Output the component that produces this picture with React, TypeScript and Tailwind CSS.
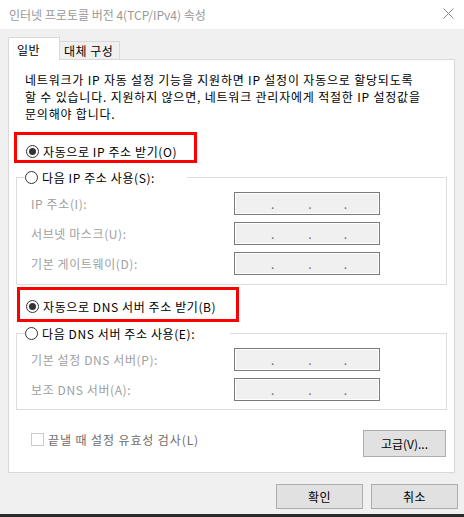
import React from "react";

const FONT = '"Noto Sans CJK KR", "Noto Sans", sans-serif';

function Radio({ checked }: { checked?: boolean }) {
  return (
    <span className="flex h-[13px] w-[13px] shrink-0 items-center justify-center rounded-full border border-[#333333] bg-white">
      {checked && <span className="h-[7px] w-[7px] rounded-full bg-[#333333]" />}
    </span>
  );
}

function IpBox() {
  return (
    <div className="h-[23px] w-[146px] border border-[#7a7a7a] bg-[#f0f0f0] tracking-normal shadow-[inset_0_0_0_1px_#ffffff]">
      <div className="flex h-full items-end pb-[4px] text-[12px] leading-[12px] text-[#6d6d6d]">
        <span className="ml-[36px]">.</span>
        <span className="ml-[34px]">.</span>
        <span className="ml-[32px]">.</span>
      </div>
    </div>
  );
}

function FieldRow({ label }: { label: string }) {
  return (
    <div className="flex h-[23px] items-center">
      <span className="w-[217px] shrink-0 pl-[14px] text-[12px] leading-[17px] text-[#a0a0a0]">{label}</span>
      <IpBox />
    </div>
  );
}

export default function App() {
  return (
    <div
      className="flex h-[517px] w-[464px] flex-col overflow-hidden bg-[#f0f0f0] text-black"
      style={{ fontFamily: FONT }}
    >
      {/* title bar */}
      <div className="flex h-[29px] shrink-0 items-center justify-between bg-white pl-[9px] pr-[10px]">
        <span className="text-[12px] leading-[17px] text-[#999999]">인터넷 프로토콜 버전 4(TCP/IPv4) 속성</span>
        <svg width="11" height="11" viewBox="0 0 11 11" className="mb-[2px]">
          <path d="M0.5 0.5 L10.5 10.5 M10.5 0.5 L0.5 10.5" stroke="#8c8c8c" strokeWidth="1" fill="none" />
        </svg>
      </div>

      {/* tabs */}
      <div className="ml-[8px] mt-[8px] flex items-end">
        <div className="relative z-10 -mb-px flex h-[23px] w-[52px] items-center border border-b-0 border-[#d9d9d9] bg-white pl-[8px] text-[12px] leading-[17px] tracking-[0.5px]">
          일반
        </div>
        <div className="flex h-[18px] w-[60px] items-center border-r border-t border-[#d9d9d9] pl-[4px] text-[12px] leading-[17px] tracking-[0.5px]">
          대체 구성
        </div>
      </div>

      {/* panel */}
      <div className="mx-[8px] flex h-[414px] w-[447px] flex-col border border-[#d9d9d9] bg-white text-[12px] tracking-[0.6px]">
        <p className="pl-[16px] pt-[11px] leading-[17px] tracking-[0.8px]">
          네트워크가 IP 자동 설정 기능을 지원하면 IP 설정이 자동으로 할당되도록
          <br />
          할 수 있습니다. 지원하지 않으면, 네트워크 관리자에게 적절한 IP 설정값을
          <br />
          문의해야 합니다.
        </p>

        {/* red box 1 */}
        <div className="ml-[5px] mt-[10px] h-[31px] w-[183px] border-[3px] border-[#ff0000] pl-[9px] pt-[8px]">
          <div className="flex h-[17px] items-center gap-[4px] leading-[17px]">
            <Radio checked />
            <span>자동으로 IP 주소 받기(O)</span>
          </div>
        </div>

        {/* group 1 */}
        <fieldset className="ml-[7px] mt-[5px] w-[431px] border border-[#dcdcdc] pb-[9px]">
          <legend className="ml-[8px] flex h-[18px] w-[162px] items-center gap-[4px] leading-[17px]">
            <Radio />
            <span>다음 IP 주소 사용(S):</span>
          </legend>
          <div className="mt-[6px] flex flex-col gap-[7px]">
            <FieldRow label="IP 주소(I):" />
            <FieldRow label="서브넷 마스크(U):" />
            <FieldRow label="기본 게이트웨이(D):" />
          </div>
        </fieldset>

        {/* red box 2 */}
        <div className="ml-[8px] mt-[2px] h-[35px] w-[222px] border-[3px] border-[#ff0000] pl-[6px] pt-[8px]">
          <div className="flex h-[17px] items-center gap-[4px] leading-[17px]">
            <Radio checked />
            <span>자동으로 DNS 서버 주소 받기(B)</span>
          </div>
        </div>

        {/* group 2 */}
        <fieldset className="ml-[7px] mt-[2px] w-[431px] border border-[#dcdcdc] pb-[8px]">
          <legend className="ml-[8px] flex h-[18px] w-[205px] items-center gap-[4px] leading-[17px]">
            <Radio />
            <span>다음 DNS 서버 주소 사용(E):</span>
          </legend>
          <div className="mt-[6px] flex flex-col gap-[7px]">
            <FieldRow label="기본 설정 DNS 서버(P):" />
            <FieldRow label="보조 DNS 서버(A):" />
          </div>
        </fieldset>

        {/* checkbox + advanced */}
        <div className="mt-[20px] flex items-start justify-between pl-[22px] pr-[8px]">
          <div className="mt-[3px] flex items-center gap-[4px]">
            <span className="h-[13px] w-[13px] border border-[#cccccc] bg-white" />
            <span className="leading-[13px] tracking-[0.9px] text-[#6d6d6d]">끝낼 때 설정 유효성 검사(L)</span>
          </div>
          <button className="flex h-[27px] w-[83px] items-center justify-center border border-[#adadad] bg-[#e1e1e1] text-[12px] leading-[17px] tracking-normal">
            고급(V)...
          </button>
        </div>
      </div>

      {/* bottom buttons */}
      <div className="mt-[11px] flex justify-end gap-[8px] pr-[6px] tracking-[0.5px]">
        <button className="flex h-[25px] w-[87px] items-center justify-center border border-[#adadad] bg-[#e1e1e1] text-[12px] leading-[17px]">
          확인
        </button>
        <button className="flex h-[25px] w-[87px] items-center justify-center border border-[#adadad] bg-[#e1e1e1] text-[12px] leading-[17px]">
          취소
        </button>
      </div>

      <div className="mt-auto h-[3px] w-full bg-[#2b2b2b]" />
    </div>
  );
}
